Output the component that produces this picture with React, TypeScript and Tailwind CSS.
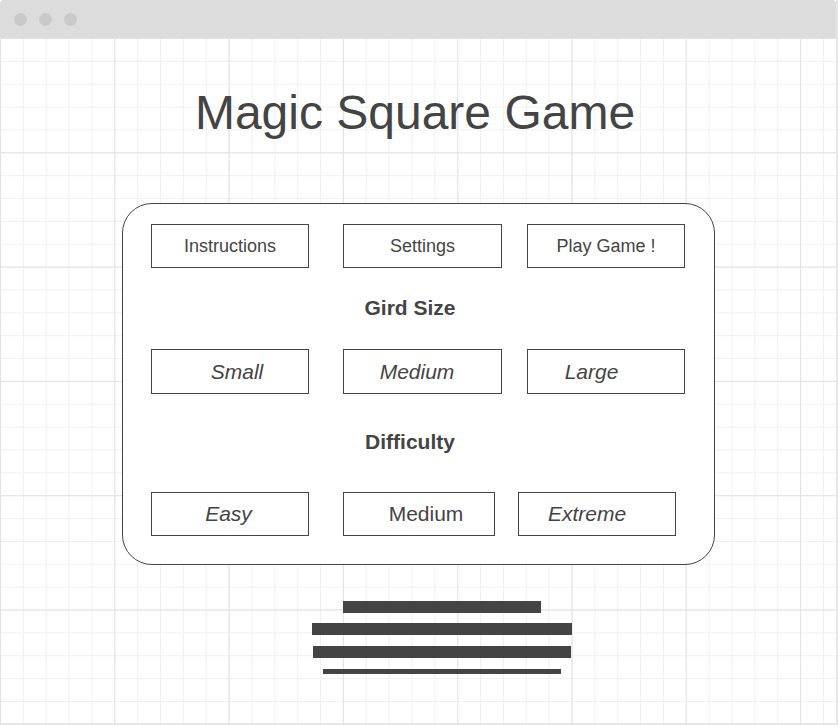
import React from "react";

const font = "font-['Liberation_Sans',Arial,sans-serif]";

function Btn({
  label,
  cls,
  textCls,
}: {
  label: string;
  cls: string;
  textCls: string;
}) {
  return (
    <div
      className={`flex items-center justify-center border border-[#444] bg-white text-[#444] ${cls} ${textCls}`}
    >
      {label}
    </div>
  );
}

export default function App() {
  return (
    <div className={`w-[838px] h-[726px] bg-white ${font}`}>
      <div className="w-[838px] h-[726px] flex flex-col">
        <div className="w-[838px] h-[725px] flex flex-col border-r-2 border-b-2 border-[#e6e6e6] box-border">
          {/* Top bar */}
          <div className="h-[38px] shrink-0 bg-[#dcdcdc] rounded-t-[4px] flex items-center gap-[12px] pl-[14px] pt-[1px]">
            <div className="w-[13px] h-[13px] rounded-full bg-[#c9c9c9]" />
            <div className="w-[13px] h-[13px] rounded-full bg-[#c9c9c9]" />
            <div className="w-[13px] h-[13px] rounded-full bg-[#c9c9c9]" />
          </div>
          {/* Content with grid */}
          <div className="flex-1 flex flex-col [background-image:linear-gradient(to_right,#e2e2e2_1px,transparent_1px),linear-gradient(to_bottom,#e2e2e2_1px,transparent_1px),linear-gradient(to_right,#f0f0f0_1px,transparent_1px),linear-gradient(to_bottom,#f0f0f0_1px,transparent_1px)] [background-size:114.3px_114.3px,114.3px_114.3px,22.86px_22.86px,22.86px_22.86px]">
            <div className="mt-[51px] h-[48px] flex justify-center pr-[6px] text-[48px] leading-[48px] text-[#444]">
              Magic Square Game
            </div>

            {/* Card */}
            <div className="mt-[66px] ml-[122px] w-[593px] h-[362px] border border-[#444] rounded-[30px] bg-white flex flex-col pt-[20px] pl-[28px]">
              <div className="flex h-[44px]">
                <Btn label="Instructions" cls="w-[158px] h-[44px]" textCls="text-[18px]" />
                <Btn label="Settings" cls="ml-[34px] w-[159px] h-[44px]" textCls="text-[18px]" />
                <Btn label="Play Game !" cls="ml-[25px] w-[158px] h-[44px]" textCls="text-[18px]" />
              </div>
              <div className="mt-[28px] h-[24px] leading-[24px] text-[21px] font-bold text-[#444] flex justify-center pr-[45px]">
                Gird Size
              </div>
              <div className="mt-[29px] flex h-[45px]">
                <Btn label="Small" cls="w-[158px] h-[45px] pl-[14px]" textCls="text-[21px] italic" />
                <Btn label="Medium" cls="ml-[34px] w-[159px] h-[45px] pr-[11px]" textCls="text-[21px] italic" />
                <Btn label="Large" cls="ml-[25px] w-[158px] h-[45px] pr-[29px]" textCls="text-[21px] italic" />
              </div>
              <div className="mt-[36px] h-[24px] leading-[24px] text-[21px] font-bold text-[#444] flex justify-center pr-[45px]">
                Difficulty
              </div>
              <div className="mt-[38px] flex h-[44px]">
                <Btn label="Easy" cls="w-[158px] h-[44px] pr-[3px]" textCls="text-[21px] italic" />
                <Btn label="Medium" cls="ml-[34px] w-[152px] h-[44px] pl-[14px]" textCls="text-[21px]" />
                <Btn label="Extreme" cls="ml-[23px] w-[158px] h-[44px] pr-[20px]" textCls="text-[21px] italic" />
              </div>
            </div>

            {/* Bars */}
            <div className="mt-[36px] flex flex-col items-center pl-[48px]">
              <div className="w-[198px] h-[12px] bg-[#444]" />
              <div className="mt-[10px] w-[260px] h-[12px] bg-[#444]" />
              <div className="mt-[11px] w-[258px] h-[12px] bg-[#444]" />
              <div className="mt-[11px] w-[238px] h-[5px] bg-[#444]" />
            </div>
          </div>
        </div>
      </div>
    </div>
  );
}
